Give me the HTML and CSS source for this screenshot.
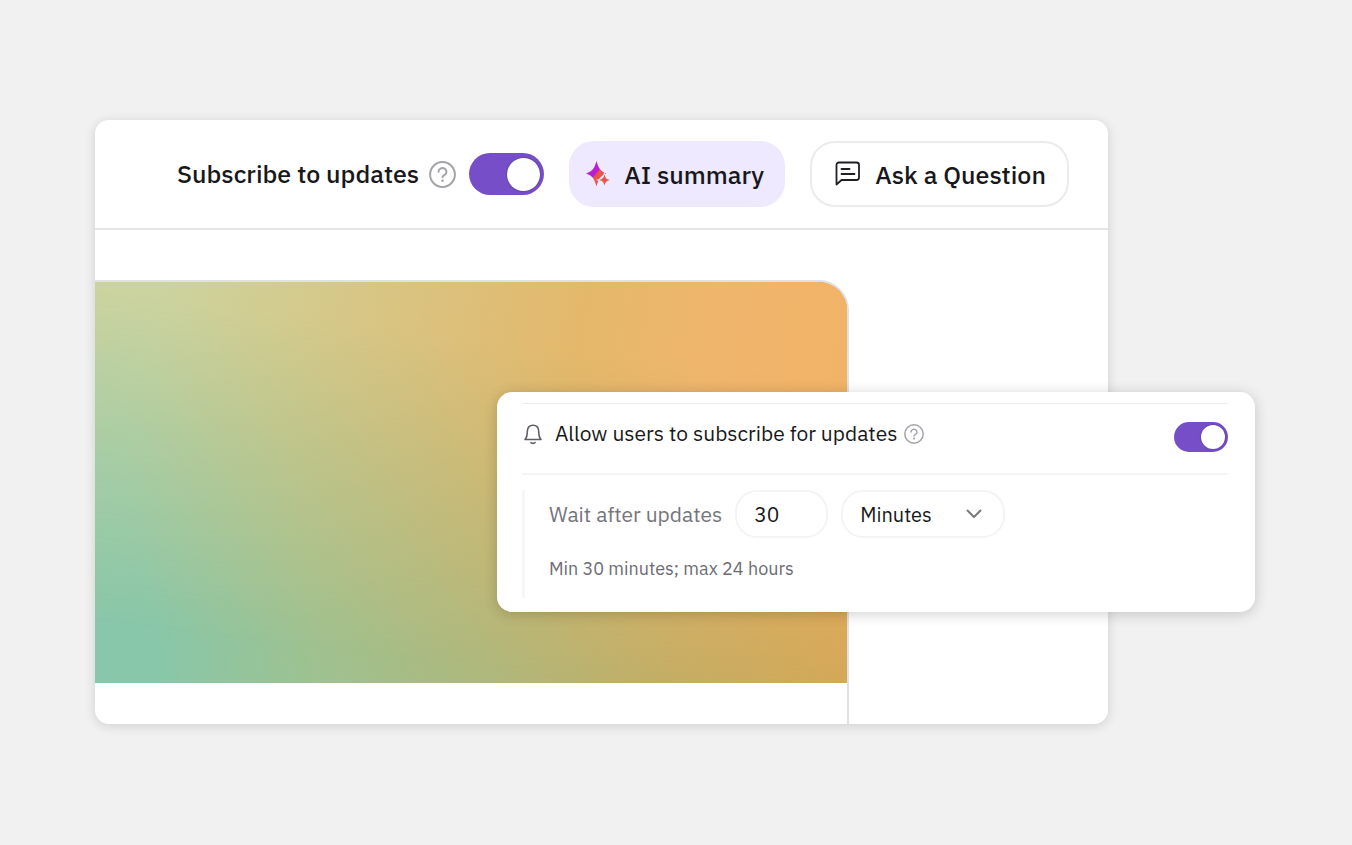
FILE: index.html
```html
<!DOCTYPE html>
<html lang="en">
<head>
<meta charset="utf-8">
<meta name="viewport" content="width=device-width, initial-scale=1">
<title>Subscribe to updates</title>
<link rel="stylesheet" href="styles.css">
</head>
<body>
<main class="stage">
  <section class="board">
    <header class="toolbar">
      <div class="subscribe">
        <label class="subscribe-label" for="subscribe">Subscribe to updates</label>
        <svg class="help" viewBox="0 0 27 27" aria-hidden="true"><circle cx="13.500" cy="13.500" r="12.400"/><path d="M9.500 10.800a4 3.700 0 1 1 6.100 3.100c-1.400.8-2.100 1.200-2.100 2.300"/><circle class="dot" cx="13.500" cy="19.700" r="1.300"/></svg>
        <input class="toggle" type="checkbox" id="subscribe" checked>
      </div>
      <button class="btn btn-ai" type="button">
        <svg class="icon-spark" viewBox="0 0 24 28" aria-hidden="true">
          <defs><linearGradient id="spark" x1="0" y1="0" x2="1" y2="1"><stop offset=".47" stop-color="#b91fd2"/><stop offset=".53" stop-color="#ea5545"/></linearGradient></defs>
          <path fill="url(#spark)" d="M10.500 1C12.700 8.300 14 10.800 20.500 13.500C14 16.200 12.700 18.700 10.500 26.500C8.300 18.700 7 16.200 0 13.500C7 10.800 8.300 8.300 10.500 1Z"/>
          <path fill="#ea5545" stroke="#eee9ff" stroke-width="2" paint-order="stroke" d="M18.500 14.500C19.500 18 20.300 19 23.700 20C20.300 21 19.500 22 18.500 25.500C17.500 22 16.700 21 13.300 20C16.700 19 17.500 18 18.500 14.500Z"/>
        </svg>
        AI summary
      </button>
      <button class="btn btn-ask" type="button">
        <svg class="icon-chat" viewBox="0 0 26 26" aria-hidden="true"><path d="M1.500 23.500V4a2.500 2.500 0 0 1 2.500-2.500H21.500A2.500 2.500 0 0 1 24 4V16.500A2.500 2.500 0 0 1 21.500 19H6.500Z"/><path d="M6.500 8h8M6.500 13h13"/></svg>
        Ask a Question
      </button>
    </header>
    <div class="content">
      <article class="post">
        <div class="cover"></div>
      </article>
    </div>
  </section>

  <section class="panel">
    <div class="setting">
      <svg class="icon-bell" viewBox="0 0 18 21" aria-hidden="true"><path d="M1 15.500H17C15.300 13.600 14.700 12 14.700 7.500C14.700 3.500 12.600 1.200 9 1.200S3.300 3.500 3.300 7.500C3.300 12 2.700 13.600 1 15.500Z"/><path d="M6.900 18.500C7.300 19.700 10.700 19.700 11.100 18.500"/></svg>
      <label class="setting-label" for="allow">Allow users to subscribe for updates</label>
      <svg class="help help-small" viewBox="0 0 27 27" aria-hidden="true"><circle cx="13.500" cy="13.500" r="12.400"/><path d="M9.500 10.800a4 3.700 0 1 1 6.100 3.100c-1.400.8-2.100 1.200-2.100 2.300"/><circle class="dot" cx="13.500" cy="19.700" r="1.400"/></svg>
      <input class="toggle toggle-small" type="checkbox" id="allow" checked>
    </div>
    <div class="details">
      <div class="wait">
        <label class="wait-label" for="amount">Wait after updates</label>
        <input class="field amount" id="amount" type="text" inputmode="numeric" value="30">
        <div class="picker">
          <select class="field unit" aria-label="Unit"><option>Minutes</option><option>Hours</option></select>
          <svg class="chevron" viewBox="0 0 16 10" aria-hidden="true"><path d="M1.500 1.500 8 8l6.500-6.500"/></svg>
        </div>
      </div>
      <p class="hint">Min 30 minutes; max 24 hours</p>
    </div>
  </section>
</main>
</body>
</html>
```
FILE: styles.css
```css
* {
  box-sizing: border-box;
}

body {
  margin: 0;
  background: #f1f1f1;
  color: #18181b;
  font-family: "IBM Plex Sans", Roboto, sans-serif;
}

button,
input,
select {
  margin: 0;
  color: inherit;
  font-family: inherit;
}

.stage {
  position: relative;
  padding: 120px 7.15vw 120px 7vw;
}

.board {
  width: 87.3%;
  overflow: hidden;
  border-radius: 14px;
  background: #fff;
  box-shadow: 0 2px 12px rgba(0, 0, 0, 0.14);
}

.toolbar {
  display: flex;
  align-items: center;
  justify-content: flex-end;
  gap: 25px;
  padding: 21px 39px 21px 24px;
  border-bottom: 2px solid #e5e5e6;
}

.subscribe {
  display: flex;
  align-items: center;
}

.subscribe-label {
  margin-right: 10px;
  font-size: 25px;
  font-weight: 500;
  line-height: 32px;
  white-space: nowrap;
}

.help {
  width: 27px;
  height: 27px;
  margin-right: 13px;
  flex: none;
  fill: none;
  stroke: #a3a3a8;
  stroke-width: 2;
  stroke-linecap: round;
}

.help .dot {
  fill: #a3a3a8;
  stroke: none;
}

.help-small {
  width: 20px;
  height: 20px;
  margin: 0 auto 0 7px;
}

.toggle {
  display: flex;
  align-items: center;
  justify-content: flex-end;
  flex: none;
  width: 75px;
  height: 42px;
  padding: 4px;
  border-radius: 21px;
  background: #764fc8;
  appearance: none;
}

.toggle::before {
  content: "";
  width: 33px;
  height: 33px;
  border-radius: 50%;
  background: #fff;
  box-shadow: 0 0 2px rgba(0, 0, 0, 0.4);
}

.toggle:not(:checked) {
  justify-content: flex-start;
  background: #c9c9ce;
}

.toggle-small {
  width: 54px;
  height: 30px;
  padding: 3px;
}

.toggle-small::before {
  width: 24px;
  height: 24px;
}

.btn {
  display: flex;
  align-items: center;
  height: 66px;
  padding: 0 21px 0 23px;
  border: 2px solid #ebebec;
  border-radius: 25px;
  background: #fff;
  font-size: 25px;
  font-weight: 500;
  white-space: nowrap;
}

.btn-ai {
  gap: 14px;
  padding: 0 19px 0 15px;
  border-color: #eee9ff;
  background: #eee9ff;
}

.btn-ask {
  gap: 14px;
}

.icon-spark {
  width: 24px;
  height: 28px;
}

.icon-chat {
  width: 26px;
  height: 26px;
  fill: none;
  stroke: #202024;
  stroke-width: 1.8;
  stroke-linecap: round;
  stroke-linejoin: round;
}

.content {
  padding-top: 50px;
}

.post {
  width: 74.4%;
  padding-bottom: 41px;
  border: 2px solid #e0e1e4;
  border-width: 2px 2px 0 0;
  border-top-right-radius: 30px;
}

.cover {
  position: relative;
  height: 401px;
  overflow: hidden;
  border-top-right-radius: 28px;
  background: linear-gradient(80deg, #88c7a9 0 8%, #9fc18f 28%, #afb87c 48%, #c3ae65 70%, #d8a552 100%);
}

/* Warm upper tone fading down into the green base */
.cover::before {
  content: "";
  position: absolute;
  inset: 0;
  background: linear-gradient(100deg, #cbd39f 8%, #d3cb8e 24%, #dbc17d 42%, #e4b86b 60%, #f0b56c 78%, #f1b264 100%);
  mask-image: linear-gradient(187deg, #000 20%, rgba(0, 0, 0, 0.52) 50%, transparent 88%);
}

.panel {
  position: absolute;
  top: 392px;
  right: 7.15vw;
  width: 56.1vw;
  padding: 11px 27px 14px 25px;
  border-radius: 15px;
  background: #fff;
  box-shadow: 0 2px 14px rgba(0, 0, 0, 0.19);
}

.setting {
  display: flex;
  align-items: center;
  padding: 12px 0 21px;
  border-top: 1px solid #ededee;
  border-bottom: 2px solid #f4f4f5;
}

.setting .toggle {
  margin-top: 6px;
}

.icon-bell {
  width: 18px;
  height: 21px;
  margin: 0 13px 0 2px;
  flex: none;
  fill: none;
  stroke: #5e5e64;
  stroke-width: 1.6;
  stroke-linecap: round;
  stroke-linejoin: round;
}

.setting-label {
  padding-bottom: 2px;
  font-size: 21px;
  line-height: 28px;
}

.details {
  margin-top: 15px;
  padding-left: 24px;
  border-left: 3px solid #f6f6f7;
}

.wait {
  display: flex;
  align-items: center;
  gap: 13px;
}

.wait-label {
  color: #75757b;
  font-size: 21px;
}

.field {
  height: 48px;
  border: 2px solid #f4f4f5;
  border-radius: 22px;
  background: #fff;
}

.amount {
  width: 93px;
  padding: 0 17px;
  font-size: 21px;
}

.picker {
  position: relative;
}

.unit {
  width: 164px;
  padding: 0 17px;
  font-size: 20px;
  appearance: none;
}

.chevron {
  position: absolute;
  top: 19px;
  right: 23px;
  width: 16px;
  height: 10px;
  fill: none;
  stroke: #77777d;
  stroke-width: 2;
  stroke-linecap: round;
  stroke-linejoin: round;
  pointer-events: none;
}

.hint {
  margin: 0;
  padding: 19px 0 17px;
  color: #6c6c72;
  font-size: 18px;
  line-height: 24px;
}
```
